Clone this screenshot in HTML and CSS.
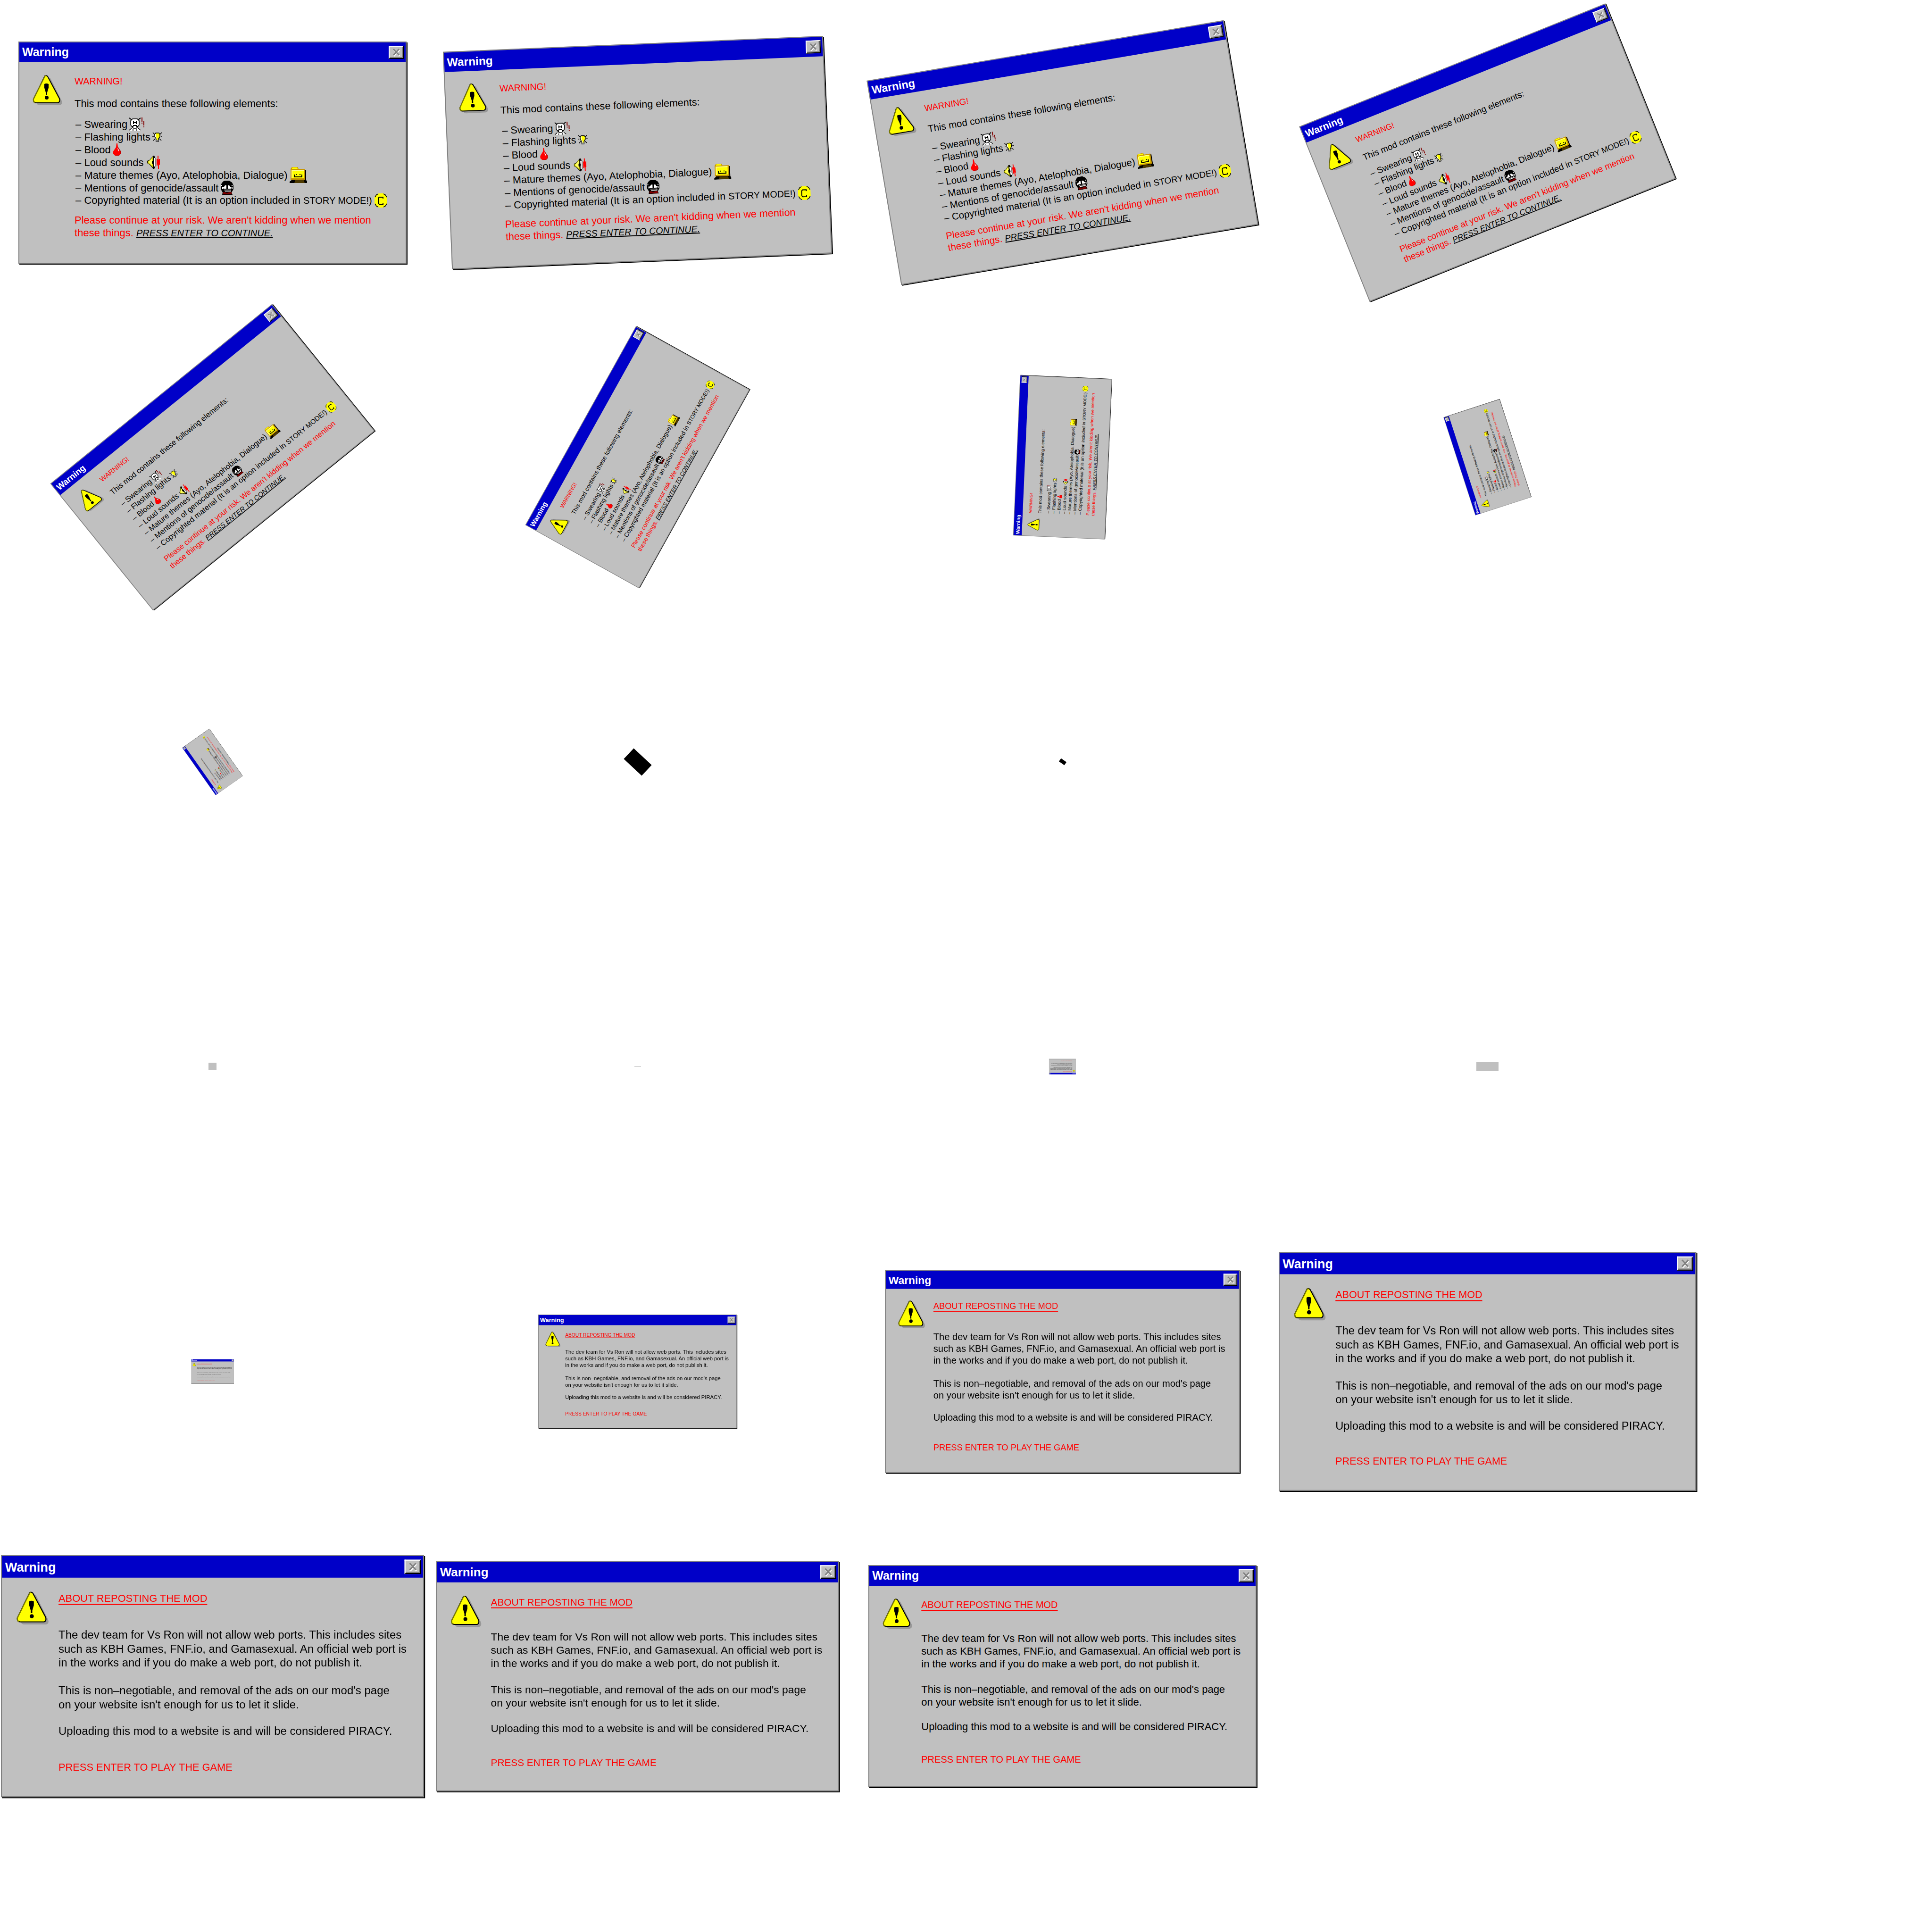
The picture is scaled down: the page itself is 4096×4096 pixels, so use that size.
FILE: index.html
```html
<!DOCTYPE html>
<html lang="en">
<head>
<meta charset="utf-8">
<title>Warning dialogs</title>
<link rel="stylesheet" href="styles.css">
</head>
<body>
<svg class="symbols" aria-hidden="true">
  <symbol id="caution" viewBox="0 0 64 65">
    <path d="M34 6q3-1 5 3L62 55q2 7-4 9H14q-6-1-5-7z" fill="#989898"/>
    <path d="M26 2q3-2 6 1L57 50q2 7-3 9H7q-6-1-5-8z" fill="#ff0" stroke="#000" stroke-width="2"/>
    <path d="M29 1q-2 0-3 2L2 51q-1 6 3 8" fill="none" stroke="#808000" stroke-width="2"/>
    <path d="M25 19q4-2 9 0v8l-3 10v5h-3v-5l-3-10z"/>
    <circle cx="30" cy="48" r="4"/>
  </symbol>
  <symbol id="swear" viewBox="0 0 33 28">
    <path d="M1 28l4-5h14l5 5z" fill="#fff"/>
    <path d="M0 27l5-4M24 27l-5-4M8 28v-3M16 28v-3" stroke="#000" stroke-width="1.5"/>
    <path d="M7 3h10l4 4v9l-4 5-2 2H9l-2-2-4-5V7z" fill="#fff" stroke="#000" stroke-width="1.5"/>
    <path d="M0 1l5 4M24 1l-5 4" stroke="#000" stroke-width="2"/>
    <path d="M8 8h2v6H8zM14 8h2v6h-2zM10 10h4v2h-4zM8 16h8v2H8zM6 18h3v3H6zM15 18h3v3h-3z"/>
    <path d="M26 0h2v9h-2zM26 11h2v2h-2zM30 8h2v9h-2zM30 19h2v2h-2z" fill="#800000"/>
  </symbol>
  <symbol id="bulb" viewBox="0 0 21 21">
    <path d="M1 1l4 4M20 1l-4 4M0 9h3M18 9h3M2 18l4-4M19 18l-4-4" stroke="#000" stroke-width="1.5"/>
    <path d="M7 2h7l2 3v5l-3 4v6H8v-6l-3-4V5z" fill="#ff0" stroke="#000" stroke-width="1.5"/>
    <path d="M6 5l2-2v8l2 3v5H9v-5L6 10z" fill="#fff"/>
    <path d="M8 17h5v3H8z" fill="#808080"/>
  </symbol>
  <symbol id="drop" viewBox="0 0 18 26">
    <path d="M8 0h2l1 8 6 9v5l-4 4H5l-4-4v-5l6-9z" fill="#f00"/>
    <path d="M11 8l6 9v5l-4 4H6" fill="none" stroke="#900000"/>
    <path d="M10 9l3 5v3l-2-3z" fill="#fff"/>
  </symbol>
  <symbol id="speaker" viewBox="0 0 27 28">
    <path d="M0 11l5-2 8-9h2l2 4v20l-2 4h-2l-8-9-5-3z"/>
    <path d="M1 12l4-2 7-8v23l-7-7-4-2z" fill="#c8c800"/>
    <path d="M3 12l3-2 5-5v17l-5-5-3-2z" fill="#ffff60"/>
    <path d="M14 5h3v18h-3v-6h-1v-5h1z" fill="#fff"/>
    <path d="M10 11h2v-2h2v3h1v4h-1v3h-2v-2h-2z"/>
    <path d="M17 5h2v18h-2z" fill="#808080"/>
    <path d="M20 7h2V0h2v10l1-3h2v12l-2 1v8h-2V17l-1 4h-2z" fill="#f00"/>
  </symbol>
  <symbol id="folder" viewBox="0 0 37 34">
    <path d="M4 6h31v22l2 2v4H0v-3l4-3z"/>
    <path d="M12 28h18l2 6H10z" fill="#4c3900"/>
    <path d="M2 26V4l3-4h12l2 4h14v23H2z" fill="#c89600"/>
    <path d="M5 3l1-2h10l1 3H5z" fill="#ff0"/>
    <path d="M4 6h26v18H4z" fill="#ff0"/>
    <path d="M4 6h26v2H6v16H4z" fill="#ffff90"/>
    <path d="M9 16h2v4h14v-4h2v6H9zM13 15h2v2h-2zM21 15h2v2h-2z"/>
  </symbol>
  <symbol id="face" viewBox="0 0 28 30">
    <path d="M7 1l3-1h9l6 4 3 6v8l-4 7 2 5H4l1-5-4-7V9l3-5z"/>
    <path d="M8 13l2-3h3v7H7l-2-2zM16 10h3l2 3 3 2-2 2h-6zM2 9h2v2H2zM24 9h2v2h-2z" fill="#fff"/>
    <path d="M8 19h15v4H10zM4 14h2v4H4zM24 14h2v4h-2z" fill="#fff"/>
    <path d="M9 20h13v1H9z"/>
    <path d="M6 25l3-1 5 2 6-2 4 1v4H6z" fill="#800000"/>
  </symbol>
  <symbol id="copyright" viewBox="0 0 29 30">
    <path d="M10 0h9l5 2 4 6v13l-4 6-5 3h-9l-5-3-4-6V8l4-6z" fill="#ff0"/>
    <path d="M9 1L5 3 2 8M20 1l4 2 3 5M9 29l-4-2-3-5M20 29l4-2 3-5" fill="none" stroke="#000" stroke-width="1.5"/>
    <path d="M19 11V8h-8l-2 2v11l2 2h8v-3" fill="none" stroke="#000" stroke-width="2"/>
  </symbol>
  <symbol id="cross" viewBox="0 0 20 18">
    <path d="M5 4l12 13M17 4L5 17" stroke="#fff" stroke-width="3"/>
    <path d="M4 2l12 13M16 2L4 15" stroke="#808080" stroke-width="3"/>
  </symbol>
</svg>

<main class="sheet"></main>

<template id="contents">
  <section class="window">
    <header class="titlebar">
      <h2 class="title">Warning</h2>
      <button class="close" type="button" aria-label="Close"><svg><use href="#cross"/></svg></button>
    </header>
    <div class="body">
      <svg class="caution"><use href="#caution"/></svg>
      <div class="text">
        <h3 class="heading">WARNING!</h3>
        <p class="intro">This mod contains these following elements:</p>
        <ul class="elements">
          <li><span>– Swearing</span><svg class="swear"><use href="#swear"/></svg></li>
          <li><span>– Flashing lights</span><svg class="bulb"><use href="#bulb"/></svg></li>
          <li><span>– Blood</span><svg class="drop"><use href="#drop"/></svg></li>
          <li><span>– Loud sounds</span><svg class="speaker"><use href="#speaker"/></svg></li>
          <li><span>– Mature themes (Ayo, Atelophobia, Dialogue)</span><svg class="folder"><use href="#folder"/></svg></li>
          <li><span>– Mentions of genocide/assault</span><svg class="face"><use href="#face"/></svg></li>
          <li><span>– Copyrighted material (It is an option included in <span class="caps">STORY MODE!)</span></span><svg class="copyright"><use href="#copyright"/></svg></li>
        </ul>
        <p class="risk">Please continue at your risk. We aren't kidding when we mention<br>these things. <em class="enter">PRESS ENTER TO CONTINUE.</em></p>
      </div>
    </div>
  </section>
</template>

<template id="repost">
  <section class="window">
    <header class="titlebar">
      <h2 class="title">Warning</h2>
      <button class="close" type="button" aria-label="Close"><svg><use href="#cross"/></svg></button>
    </header>
    <div class="body body-repost">
      <svg class="caution"><use href="#caution"/></svg>
      <div class="text">
        <h3 class="heading underlined">ABOUT REPOSTING THE MOD</h3>
        <p class="ports">The dev team for Vs Ron will not allow web ports. This includes sites<br>such as KBH Games, FNF.io, and Gamasexual. An official web port is<br>in the works and if you do make a web port, do not publish it.</p>
        <p class="ads">This is non–negotiable, and removal of the ads on our mod's page<br>on your website isn't enough for us to let it slide.</p>
        <p class="piracy">Uploading this mod to a website is and will be considered PIRACY.</p>
        <p class="play">PRESS ENTER TO PLAY THE GAME</p>
      </div>
    </div>
  </section>
</template>
<script src="script.js"></script>
</body>
</html>
```

FILE: styles.css
```css
body {
  margin: 0;
  background: #fff;
  color: #000;
  font-family: "Liberation Sans", Arial, sans-serif;
  font-size: 22px;
  line-height: 27px;
}

h2, h3, p, ul {
  margin: 0;
  padding: 0;
  font-weight: normal;
}

.symbols {
  display: none;
}

/* One cell per animation frame, four frames to a row */
.sheet {
  display: grid;
  grid-template-columns: repeat(4, 22%);
  grid-auto-rows: 646px;
}

.frame {
  display: flex;
  align-items: center;
  justify-content: center;
}

.window {
  flex: none;
  box-sizing: border-box;
  width: 823px;
  min-height: 471px;
  border: 2px solid #808080;
  background: #c0c0c0;
  box-shadow: 2px 2px 0 #000;
  white-space: nowrap;
  transform: rotate(var(--angle)) scale(var(--scale));
}

.titlebar {
  display: flex;
  align-items: center;
  justify-content: space-between;
  height: 42px;
  padding: 0 4px 0 6px;
  background: #0000c8;
}

.title {
  color: #fff;
  font-size: 25px;
  font-weight: bold;
}

.close {
  display: flex;
  align-items: center;
  justify-content: center;
  width: 32px;
  height: 28px;
  padding: 0;
  border: 2px solid;
  border-color: #fff #000 #000 #fff;
  background: #c0c0c0;
  box-shadow: inset -2px -2px 0 #808080;
}

.close svg {
  width: 20px;
  height: 18px;
}

.body {
  display: flex;
  align-items: flex-start;
  gap: 25px;
  padding: 27px 0 0 28px;
}

.body-repost {
  gap: 18px;
}

.caution {
  flex: none;
  width: 64px;
  height: 65px;
}

.heading,
.caps,
.enter,
.play {
  font-size: 20px;
}

.heading,
.risk,
.play {
  color: #f00;
}

.underlined {
  text-decoration: underline;
  text-decoration-thickness: 2px;
  text-underline-offset: 4px;
}

.intro {
  margin-top: 20px;
}

.elements {
  margin-top: 17px;
  padding-left: 2px;
  list-style: none;
}

.elements li {
  display: flex;
  align-items: center;
  gap: 4px;
  height: 27px;
}

.elements svg {
  flex: none;
}

.swear { width: 33px; height: 28px; }
.bulb { width: 21px; height: 21px; }
.drop { width: 18px; height: 26px; }
.speaker { width: 27px; height: 28px; margin-left: 4px; }
.folder { width: 37px; height: 34px; }
.face { width: 28px; height: 30px; }
.copyright { width: 29px; height: 30px; }

.risk {
  margin-top: 14px;
}

.enter {
  color: #000;
  text-decoration: underline;
  text-decoration-thickness: 2px;
}

.ports { margin-top: 44px; }
.ads { margin-top: 27px; }
.piracy { margin-top: 25px; }
.play { margin-top: 43px; }

/* Frames too small for any of the window's content to show */
.block {
  width: var(--width);
  height: var(--height);
  background: var(--fill);
  transform: rotate(var(--angle));
}
```

FILE: script.js
```js
// Frames of the animation in reading order: the first dialog spins away,
// then the second one grows in.
const frames = [
  { show: "contents", angle: 0, scale: 1 },
  { show: "contents", angle: -2.4, scale: 0.98 },
  { show: "contents", angle: -9.6, scale: 0.933 },
  { show: "contents", angle: -21.9, scale: 0.85 },
  { show: "contents", angle: -39, scale: 0.735 },
  { show: "contents", angle: -60.9, scale: 0.586 },
  { show: "contents", angle: -87.5, scale: 0.413 },
  { show: "contents", angle: -108, scale: 0.265 },
  { show: "contents", angle: -125.2, scale: 0.149 },
  { width: 52, height: 31, fill: "#000", angle: 43 },
  { width: 14, height: 8, fill: "#000", angle: 35 },
  {},
  { width: 17, height: 16, fill: "#c0c0c0", angle: 0 },
  { width: 14, height: 2, fill: "#d8d8d8", angle: 0 },
  { show: "repost", angle: 180, scale: 0.069 },
  { width: 47, height: 20, fill: "#c0c0c0", angle: 0 },
  { show: "repost", angle: 0, scale: 0.11 },
  { show: "repost", angle: 0, scale: 0.512 },
  { show: "repost", angle: 0, scale: 0.914 },
  { show: "repost", angle: 0, scale: 1.076 },
  { show: "repost", angle: 0, scale: 1.09 },
  { show: "repost", angle: 0, scale: 1.038 },
  { show: "repost", angle: 0, scale: 1 }
];

const sheet = document.querySelector(".sheet");

for (const frame of frames) {
  const cell = document.createElement("div");
  cell.className = "frame";
  if (frame.show) {
    const copy = document.getElementById(frame.show).content.cloneNode(true);
    const win = copy.querySelector(".window");
    win.style.setProperty("--angle", frame.angle + "deg");
    win.style.setProperty("--scale", frame.scale);
    cell.append(copy);
  } else if (frame.fill) {
    const block = document.createElement("div");
    block.className = "block";
    block.style.setProperty("--width", frame.width + "px");
    block.style.setProperty("--height", frame.height + "px");
    block.style.setProperty("--fill", frame.fill);
    block.style.setProperty("--angle", frame.angle + "deg");
    cell.append(block);
  }
  sheet.append(cell);
}
```
